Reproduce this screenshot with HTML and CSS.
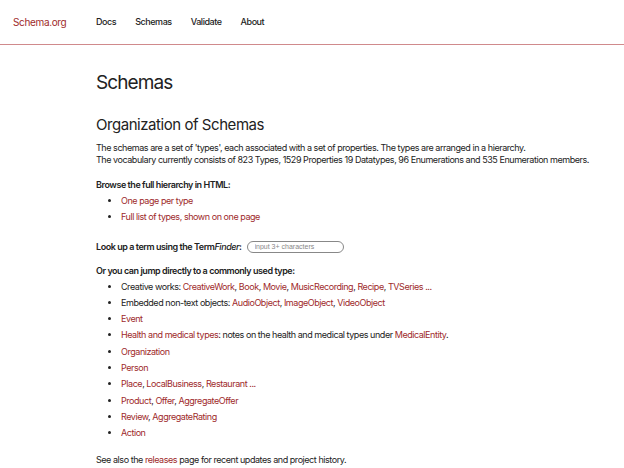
FILE: index.html
```html
<!DOCTYPE html>
<html lang="en">
<head>
<meta charset="utf-8">
<title>Schemas - Schema.org</title>
<link rel="stylesheet" href="styles.css">
</head>
<body>
<header class="site-header">
  <a class="logo" href="#">Schema.org</a>
  <nav class="nav">
    <a href="#">Docs</a>
    <a href="#">Schemas</a>
    <a href="#">Validate</a>
    <a href="#">About</a>
  </nav>
</header>
<main class="content">
  <h1 class="page-title">Schemas</h1>
  <h2 class="section-title">Organization of Schemas</h2>
  <p class="intro">The schemas are a set of 'types', each associated with a set of properties. The types are arranged in a hierarchy.<br>The vocabulary currently consists of 823 Types, 1529 Properties 19 Datatypes, 96 Enumerations and 535 Enumeration members.</p>

  <p class="label">Browse the full hierarchy in HTML:</p>
  <ul class="links">
    <li><a href="#">One page per type</a></li>
    <li><a href="#">Full list of types, shown on one page</a></li>
  </ul>

  <div class="lookup">
    <span class="label">Look up a term using the Term<em>Finder</em>:</span>
    <input class="search" type="text" placeholder="input 3+ characters">
  </div>

  <p class="label label-jump">Or you can jump directly to a commonly used type:</p>
  <ul class="links">
    <li>Creative works: <a href="#">CreativeWork</a>, <a href="#">Book</a>, <a href="#">Movie</a>, <a href="#">MusicRecording</a>, <a href="#">Recipe</a>, <a href="#">TVSeries</a> <a href="#">...</a></li>
    <li>Embedded non-text objects: <a href="#">AudioObject</a>, <a href="#">ImageObject</a>, <a href="#">VideoObject</a></li>
    <li><a href="#">Event</a></li>
    <li><a href="#">Health and medical types</a>: notes on the health and medical types under <a href="#">MedicalEntity</a>.</li>
    <li><a href="#">Organization</a></li>
    <li><a href="#">Person</a></li>
    <li><a href="#">Place</a>, <a href="#">LocalBusiness</a>, <a href="#">Restaurant</a> <a href="#">...</a></li>
    <li><a href="#">Product</a>, <a href="#">Offer</a>, <a href="#">AggregateOffer</a></li>
    <li><a href="#">Review</a>, <a href="#">AggregateRating</a></li>
    <li><a href="#">Action</a></li>
  </ul>

  <p class="footer-note">See also the <a href="#">releases</a> page for recent updates and project history.</p>
</main>
</body>
</html>
```
FILE: styles.css
```css
html, body {
  margin: 0;
  padding: 0;
  background: #fff;
}

body {
  font-family: Inter, "Noto Sans", sans-serif;
  color: #222;
  font-size: 9px;
  line-height: 12px;
  letter-spacing: -0.45px;
}

a {
  color: #9e2a2b;
  text-decoration: none;
}

.site-header {
  display: flex;
  align-items: center;
  height: 44px;
  padding: 0 13px;
  border-bottom: 1px solid #d08a8c;
}

.logo {
  font-size: 10px;
  letter-spacing: -0.35px;
  width: 83px;
  color: #9e2a2b;
}

.nav {
  display: flex;
  gap: 19px;
}

.nav a {
  color: #222;
  font-size: 9px;
  font-weight: 500;
  letter-spacing: -0.45px;
}

.content {
  padding: 0 24px 0 96px;
}

.page-title {
  font-size: 19px;
  font-weight: 400;
  line-height: 26px;
  letter-spacing: -0.9px;
  margin: 25px 0 0;
}

.section-title {
  font-size: 15px;
  font-weight: 400;
  line-height: 22px;
  letter-spacing: -0.45px;
  margin: 18px 0 0;
}

.intro {
  margin: 6px 0 0;
}

.label {
  font-weight: 600;
}

p.label {
  margin: 13px 0 0;
}

p.label-jump {
  margin-top: 12px;
}

.links {
  margin: 2px 0 0;
  padding-left: 25px;
}

.links li {
  line-height: 16.3px;
}

.links li::marker {
  color: #222;
}

.lookup {
  display: flex;
  align-items: center;
  gap: 5px;
  height: 12px;
  margin-top: 15px;
}

.lookup em {
  font-style: italic;
  font-weight: 500;
}

.search {
  box-sizing: border-box;
  width: 97px;
  height: 12px;
  padding: 0 0 0 7px;
  border: 1px solid #888;
  border-radius: 6px;
  font-family: "Liberation Sans", Arial, sans-serif;
  font-size: 7px;
  letter-spacing: 0;
  outline: none;
}

.search::placeholder {
  color: #888;
}

.footer-note {
  margin: 12px 0 0;
}
```
